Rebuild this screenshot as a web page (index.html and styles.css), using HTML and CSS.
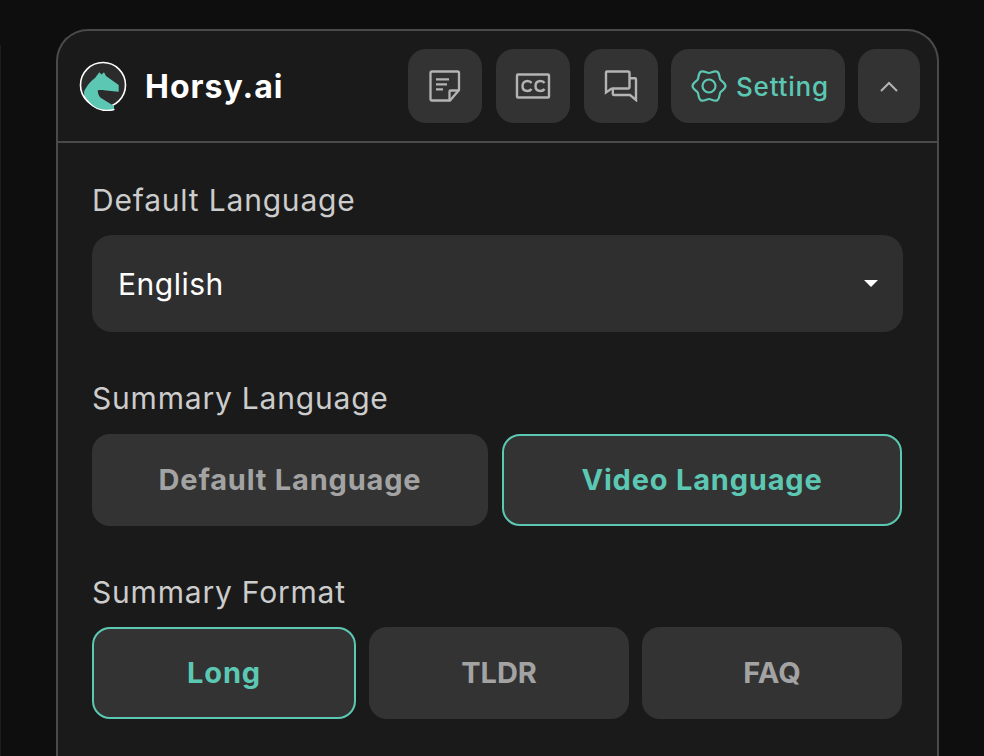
FILE: index.html
```html
<!DOCTYPE html>
<html lang="en">
<head>
    <meta charset="UTF-8">
    <meta name="viewport" content="width=device-width, initial-scale=1.0">
    <title>Horsy.ai</title>
    <link rel="stylesheet" href="styles.css">
</head>
<body>
    <div class="edge"></div>
    <div class="panel">
        <div class="header">
            <div class="brand">
                <svg class="logo" width="48" height="50" viewBox="0 0 48 50">
                    <circle cx="24" cy="24" r="22.500" fill="#2b2b2b" stroke="#fff" stroke-width="1.600"/>
                    <path d="M5.300 34C4.500 31 5.500 29 7 27C9 23 12 20 16 17L20.300 11.300L22.500 13.500L25 11.300L27 15L39.700 24L39.700 30.700L27 29.500C23 29 19.500 28.500 18.700 29.500C19 33 20 35.500 22 37L35 45L35 48.500C32 49.500 29 49.700 27 49.700C18 49 10 43 5.300 34Z" fill="#5cc8b3"/>
                    <path d="M4.800 34.500C10 43.500 18 49.300 27 49.500C30 49.500 33 49.200 35.500 48.300" fill="none" stroke="#fff" stroke-width="1.400"/>
                </svg>
                <span class="brand-name">Horsy.ai</span>
            </div>
            <div class="tools">
                <button class="tool">
                    <svg width="32" height="32" viewBox="0 0 32 32" fill="none" stroke="#b4b4b4" stroke-width="2.300">
                        <path d="M21 30.500H3C2 30.500 1.500 30 1.500 29V3C1.500 2 2 1.500 3 1.500H28.500C29.500 1.500 30 2 30 3V20L21 30.500Z"/>
                        <path d="M20.500 30V21.500C20.500 21 21 20.500 21.500 20.500H30"/>
                        <path d="M7 9.300H20M7 14.300H18M7 19.300H14"/>
                    </svg>
                </button>
                <button class="tool">
                    <svg width="36" height="26" viewBox="0 0 36 26" fill="none" stroke="#b4b4b4" stroke-width="2.400">
                        <rect x="2" y="1.500" width="32" height="23" rx="1"/>
                        <path d="M16.500 10C15.500 8.500 14 8 12.500 8C9.500 8 7.500 10 7.500 13S9.500 18 12.500 18C14 18 15.500 17.500 16.500 16"/>
                        <path d="M29.500 10C28.500 8.500 27 8 25.500 8C22.500 8 20.500 10 20.500 13S22.500 18 25.500 18C27 18 28.500 17.500 29.500 16"/>
                    </svg>
                </button>
                <button class="tool">
                    <svg width="34" height="32" viewBox="0 0 34 32" fill="none" stroke="#b4b4b4" stroke-width="2.400">
                        <path d="M8 18.300L2 22.500V2.500C2 1.800 2.500 1.500 3 1.500H24C25 1.500 25.500 2 25.500 3V17C25.500 18 25 18.500 24 18.500H8"/>
                        <path d="M25.500 8.300H31C31.700 8.300 32 8.800 32 9.500V30L26 25H10C9.300 25 8.800 24.500 8.800 23.500V18.500"/>
                    </svg>
                </button>
                <button class="tool tool-setting">
                    <svg width="36" height="34" viewBox="0 0 36 34" fill="none" stroke="#5cc8b3" stroke-width="2.200">
                        <path d="M18 4C20 4 23.650 1.210 26.250 2.710C28.850 4.210 28.260 8.770 29.260 10.500C30.260 12.230 34.500 14 34.500 17C34.500 20 30.260 21.770 29.260 23.500C28.260 25.230 28.850 29.790 26.250 31.290C23.650 32.790 20 30 18 30C16 30 12.350 32.790 9.750 31.290C7.150 29.790 7.740 25.230 6.740 23.500C5.740 21.770 1.500 20 1.500 17C1.500 14 5.740 12.230 6.740 10.500C7.740 8.770 7.150 4.210 9.750 2.710C12.350 1.210 16 4 18 4Z"/>
                        <circle cx="18" cy="17" r="6.500"/>
                    </svg>
                    <span>Setting</span>
                </button>
                <button class="tool tool-small">
                    <svg width="18" height="11" viewBox="0 0 18 11" fill="none" stroke="#b4b4b4" stroke-width="2">
                        <path d="M1 10L9 2L17 10"/>
                    </svg>
                </button>
            </div>
        </div>
        <div class="content">
            <div class="label">Default Language</div>
            <div class="select">
                <span>English</span>
                <span class="arrow"></span>
            </div>
            <div class="label label-next">Summary Language</div>
            <div class="options options-two">
                <button class="option">Default Language</button>
                <button class="option active">Video Language</button>
            </div>
            <div class="label label-next">Summary Format</div>
            <div class="options options-three">
                <button class="option active">Long</button>
                <button class="option option-caps">TLDR</button>
                <button class="option option-caps">FAQ</button>
            </div>
        </div>
    </div>
</body>
</html>
```

FILE: styles.css
```css
html, body {
    height: 756px;
    overflow: hidden;
}
body {
    margin: 0;
    background-color: #0e0e0e;
    font-family: Inter, "Liberation Sans", sans-serif;
    position: relative;
}
button {
    font-family: inherit;
    border: none;
    cursor: pointer;
}
.edge {
    position: absolute;
    left: 0;
    top: 45px;
    bottom: 0;
    width: 1px;
    background-color: #1c1c1c;
}
.panel {
    box-sizing: border-box;
    width: 883px;
    height: 727px;
    margin: 29px 0 0 56px;
    background-color: #1a1a1a;
    border: 2px solid #4a4a4a;
    border-bottom: none;
    border-radius: 32px 32px 0 0;
}
.header {
    display: flex;
    align-items: center;
    justify-content: space-between;
    height: 110px;
    padding: 0 17px 0 21px;
    border-bottom: 2px solid #4a4a4a;
}
.brand {
    display: flex;
    align-items: center;
    gap: 18px;
}
.logo {
    display: block;
}
.brand-name {
    color: #fff;
    font-size: 32px;
    font-weight: 700;
    letter-spacing: 1px;
}
.tools {
    display: flex;
    gap: 14px;
}
.tool {
    display: flex;
    align-items: center;
    justify-content: center;
    width: 74px;
    height: 74px;
    background-color: #333;
    border-radius: 18px;
}
.tool-setting {
    justify-content: flex-start;
    width: 174px;
    padding: 0 0 0 20px;
    gap: 9px;
    color: #5cc8b3;
    font-size: 26px;
    font-weight: 500;
    letter-spacing: 0.8px;
    margin-left: -1px;
}
.tool-small {
    width: 62px;
    margin-left: -1px;
}
.content {
    padding: 39px 34px 0;
}
.label {
    color: #ccc;
    font-size: 30px;
    line-height: 36px;
    letter-spacing: 0.8px;
}
.label-next {
    margin-top: 48px;
}
.select {
    display: flex;
    align-items: center;
    justify-content: space-between;
    height: 97px;
    margin-top: 17px;
    padding: 0 25px 0 26px;
    background-color: #2f2f2f;
    border-radius: 20px;
    color: #fff;
    font-size: 30px;
    letter-spacing: 0.5px;
}
.arrow {
    width: 0;
    height: 0;
    border-left: 7px solid transparent;
    border-right: 7px solid transparent;
    border-top: 7px solid #fff;
}
.options {
    display: grid;
    margin-top: 18px;
    height: 92px;
}
.options-two {
    grid-template-columns: 396px 400px;
    gap: 14px;
}
.options-three {
    grid-template-columns: 264px 260px 260px;
    gap: 13px;
    margin-top: 17px;
}
.option {
    padding-bottom: 3px;
    background-color: #333;
    border-radius: 18px;
    color: #a3a3a3;
    font-size: 29px;
    font-weight: 700;
    letter-spacing: 0.8px;
}
.option.active {
    border: 2px solid #5cc8b3;
    color: #5cc8b3;
}
.option-caps {
    letter-spacing: 0;
}
```
